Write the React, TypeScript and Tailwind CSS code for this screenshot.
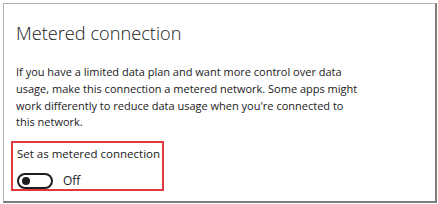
export default function App() {
  return (
    <div className="w-[438px] h-[204px] bg-white pt-[3px] pl-[3px] font-['Open_Sans','Noto_Sans',sans-serif] text-[#1a1a1a]">
      <div className="w-[434px] h-[200px] border-t border-l border-[#b0b0b0] border-r-2 border-b-2 border-r-[#7d7d7d] border-b-[#7d7d7d] pl-[7px] pt-[17px]">
        <h1 className="pl-[5px] text-[18.2px] leading-[24px] font-light">Metered connection</h1>
        <p className="mt-[19px] pl-[5px] whitespace-nowrap text-[11px] leading-[16.8px]">
          If you have a limited data plan and want more control over data
          <br />
          usage, make this connection a metered network. Some apps might
          <br />
          work differently to reduce data usage when you're connected to
          <br />
          this network.
        </p>
        <div className="mt-[10px] w-[153px] h-[50px] border-2 border-[#e0383d] pl-[4px] pt-[2px]">
          <div className="whitespace-nowrap text-[11.5px] leading-[18px]">Set as metered connection</div>
          <div className="mt-[10px] flex items-center gap-[10px]">
            <div className="w-[36px] h-[16px] rounded-full border-2 border-[#1f1f1f] flex items-center pl-[3px]">
              <div className="w-[8px] h-[8px] rounded-full bg-[#1f1f1f]" />
            </div>
            <span className="text-[12px] leading-[16px]">Off</span>
          </div>
        </div>
      </div>
    </div>
  );
}
